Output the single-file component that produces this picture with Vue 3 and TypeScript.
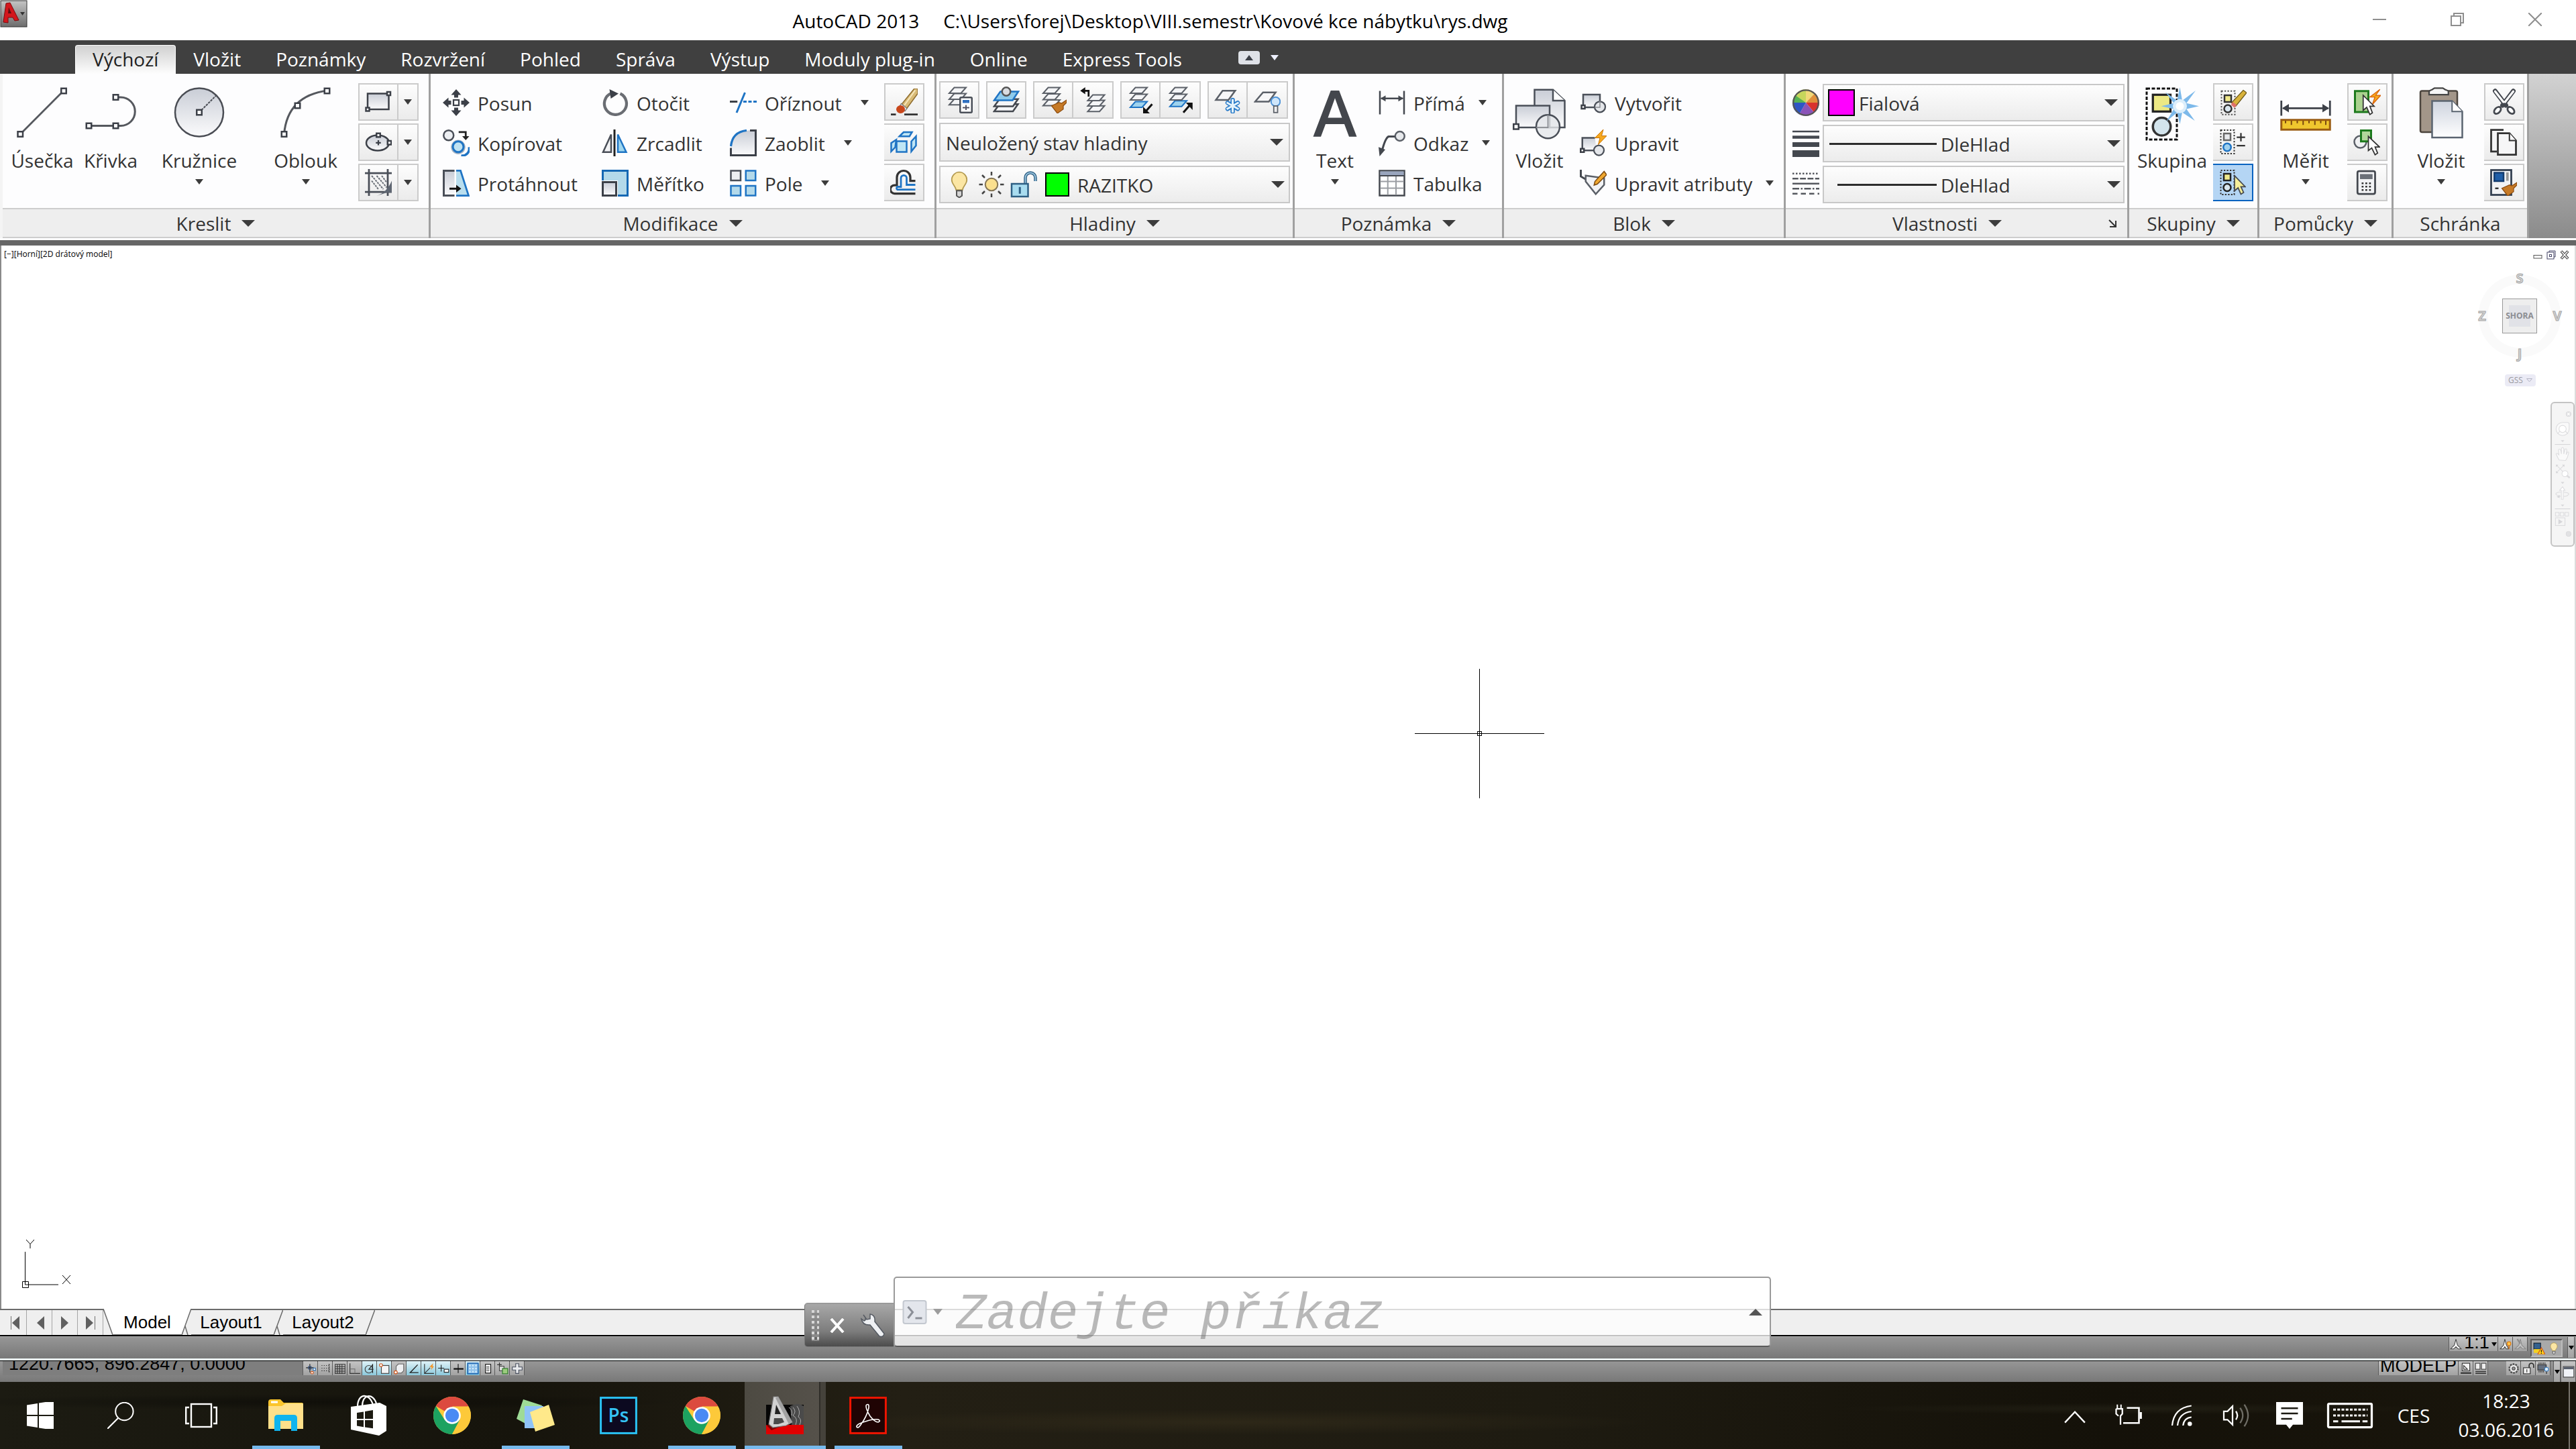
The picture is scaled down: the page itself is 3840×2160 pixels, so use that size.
<script setup lang="ts">
interface Tool {
  icon: string
  label: string
  caret?: boolean
}
interface Toggle {
  icon: string
  label: string
  on?: boolean
}
interface TaskItem {
  icon: string
  label: string
  running?: boolean
  active?: boolean
}

const sq = (x: number, y: number, s = 2.4): string =>
  `<rect x="${x - s / 2}" y="${y - s / 2}" width="${s}" height="${s}" fill="#fff" stroke="#3c4048" stroke-width="1"/>`

const sheet = (y: number, fill = '#f4f5f7', stroke = '#5b6068', x = 0): string =>
  `<path d="M${2 + x} ${y + 3.4}L${5 + x} ${y}H${12 + x}L${9 + x} ${y + 3.4}Z" fill="${fill}" stroke="${stroke}" stroke-width=".8"/>`

const chrome = `<circle cx="14" cy="14" r="14" fill="#fdc93a"/><path d="M14 14L1.9 7A14 14 0 0 1 26.1 7Z" fill="#dc4a3f"/><path d="M1.9 7A14 14 0 0 0 14 28L19.6 17.2L14 14L8.4 17.2Z" fill="#1ca261"/><path d="M14 28A14 14 0 0 0 26.2 7.3H14L20 17.2Z" fill="#fdc93a"/><circle cx="14" cy="14" r="6.4" fill="#fff"/><circle cx="14" cy="14" r="5.1" fill="#4a8af4"/>`

const icons: Record<string, string> = {
  line: `<path d="M2.9 28L28.8 2" stroke="#55585e" stroke-width="1.1"/>${sq(2.9, 28, 3)}${sq(28.8, 2.2, 3)}`,
  pline: `<path d="M19 6h3a8.5 8.5 0 0 1 0 17H3" fill="none" stroke="#55585e" stroke-width="1.2"/>${sq(19, 6, 3)}${sq(3, 23, 3)}${sq(19, 23, 3)}`,
  circle: `<circle cx="16" cy="15" r="14.4" fill="url(#gGrey)" stroke="#4a4d54" stroke-width="1"/><path d="M16 15L26 5" stroke="#4a4d54" stroke-width=".8" stroke-dasharray="1.4 .5"/>${sq(16, 15, 3)}`,
  arc: `<path d="M3 28Q5 5 29 2" fill="none" stroke="#55585e" stroke-width="1.2"/>${sq(3, 28, 3)}${sq(11, 11, 3)}${sq(28.6, 2.2, 3)}`,
  rect: `<rect x="1.6" y="3" width="12.6" height="9.4" fill="url(#gGrey)" stroke="#3c4048" stroke-width="1"/>${sq(14.2, 3, 2)}${sq(1.6, 12.4, 2)}`,
  ellipse: `<ellipse cx="7.6" cy="8.4" rx="6.8" ry="4.6" fill="url(#gGrey)" stroke="#3c4048"/><path d="M8 6.8v3M6.5 8.3h3" stroke="#3c4048" stroke-width=".9"/>${sq(8, 3.8, 2.2)}${sq(14.6, 8.3, 2.2)}`,
  hatch: `<path d="M0 2.4H16M0 13.6H16M2.4 0V16M13.6 0V16" stroke="#4a4f58" stroke-width="1.1"/><path d="M4 7l4 5M4 4l7 8M7 4l6 7M10 4l3 4" stroke="#6b7078" stroke-width=".8" stroke-dasharray="1.2 .5"/><path d="M7 16Q13 14 16 7V14L13 14Z" fill="#5f6672"/>`,
  move: `<path d="M8 0l3 3.4H9.200V5H6.800V3.400H5zM8 16l3-3.400H9.200V11H6.800v1.600H5zM0 8l3.400-3V6.800H5v2.400H3.400V11zM16 8l-3.400-3V6.800H11v2.400h1.600V11z" fill="#3c4048"/><rect x="6.400" y="6.400" width="3.200" height="3.200" fill="none" stroke="#3c4048" stroke-width=".9"/>`,
  copy: `<circle cx="3.500" cy="3.500" r="3" fill="#eceef1" stroke="#4a4f58"/><path d="M9.500 1.500h4.200v3.200" fill="none" stroke="#222" stroke-width="1.100"/><path d="M11.600 4h4.200l-2.100 2.400z" fill="#222"/><path d="M11 15.500a4 4 0 0 0 4.600-5" fill="none" stroke="#1f74c4" stroke-width="1.400"/><circle cx="9.200" cy="10.500" r="4.300" fill="#a9b6c4"/><circle cx="9.200" cy="10.300" r="3.200" fill="#bfe2f2" stroke="#1f74c4" stroke-width="1.200"/>`,
  stretch: `<path d="M7 .6H.6v14.8H7" fill="url(#gGrey)" stroke="#4a4f58" stroke-width="1.200"/><path d="M8 .5h2.600L15.400 15.400H8" fill="#b9deee" stroke="#1f74c4" stroke-width="1.100"/><path d="M4 11.300h5" stroke="#111" stroke-width="1.200"/><path d="M8 9l3 2.300L8 13.600z" fill="#111"/>`,
  rotate: `<path d="M11 2.600A6.600 6.600 0 1 1 5.800 2.400" fill="none" stroke="#6a6d73" stroke-width="1.700"/><path d="M4.600 0l5.400 2.600-4.600 3z" fill="#3c4048"/>`,
  mirror: `<path d="M5.600 3V13.500H.8z" fill="#f2f3f5" stroke="#4a4f58"/><path d="M9.600 3V13.500h5z" fill="#9fd6ee" stroke="#1f74c4"/><path d="M7.600 0V16" stroke="#222" stroke-width="1.200"/>`,
  scale: `<rect x=".6" y=".6" width="14.800" height="14.800" fill="#b3d9ea" stroke="#1568b4" stroke-width="1.200"/><rect x="0" y="6.400" width="9.600" height="9.600" fill="#fff"/><rect x=".6" y="7.400" width="8" height="8" fill="url(#gGrey)" stroke="#3c4048" stroke-width="1.200"/>`,
  trim: `<path d="M0 7.400H4.500" stroke="#3c4048" stroke-width="1.200"/><path d="M9 2L4 14" stroke="#1f74c4" stroke-width="1.200"/><path d="M8 7.400H16" stroke="#1f74c4" stroke-width="1.200" stroke-dasharray="2 1"/>`,
  fillet: `<path d="M.6 15.400V11Q1 1 11 .6H15.400V15.400Z" fill="url(#gGrey)"/><path d="M.6 11V15.400H15.400V.6H12" fill="none" stroke="#3c4048" stroke-width="1.200"/><path d="M.6 10Q1.500 1.500 10 .6" fill="none" stroke="#1f74c4" stroke-width="1.300"/>`,
  array: `<rect x=".6" y=".6" width="5.800" height="5.800" fill="#eceef1" stroke="#4a4f58"/><g fill="#b3d9ea" stroke="#1f74c4"><rect x="9.500" y=".6" width="5.800" height="5.800"/><rect x=".6" y="9.600" width="5.800" height="5.800"/><rect x="9.500" y="9.600" width="5.800" height="5.800"/></g>`,
  erase: `<path d="M14 0H16V3L9.400 12L6.200 9.600z" fill="#d9bb77" stroke="#8d6b2c" stroke-width=".6"/><path d="M14.500 1L8 10" stroke="#f6e7bd" stroke-width=".8"/><path d="M6.200 9l3.400 2.800-1.200 1.600-3.400-2.600z" fill="#e9ebee" stroke="#777" stroke-width=".5"/><ellipse cx="5.800" cy="12.400" rx="2.600" ry="2.400" fill="#c9461a"/><path d="M0 15.400H3M8 15.400H16" stroke="#333" stroke-width="1.100"/>`,
  explode: `<g fill="#bfe6f5" stroke="#1f74c4" stroke-width="1"><path d="M5.500 4.500L8 2h5L11.500 4.500z"/><path d="M3.600 6.500L.6 8.500v5L3 11z"/><path d="M12.600 7.500l2.800-3V10l-2.800 3.500z"/><rect x="3.800" y="7.400" width="6" height="6.400"/></g>`,
  offset: `<path d="M15 14.600H2.600a2.400 2.400 0 0 1 0-5H4V5a4 4 0 0 1 8 0V7H15" fill="none" stroke="#333" stroke-width="1.300"/><path d="M15 12.200H4.200a1 1 0 0 1 0-1.600H6.400V5.400a1.700 1.700 0 0 1 3.400 0V9.400H15" fill="none" stroke="#1f74c4" stroke-width="1.100"/>`,
  layerProps: `${sheet(7.500)}${sheet(4.200)}${sheet(.6)}<rect x="8.500" y="6.500" width="7" height="9" rx=".6" fill="#fff" stroke="#4a4f58"/><rect x="10" y="8" width="4" height="1.800" fill="#2f6fc0"/><path d="M10 12.600h4M12 11v3" stroke="#556" stroke-width=".8"/>`,
  layerCurrent: `<g stroke-width="1"><path d="M.8 14.800L4 10.500H15L12 14.800Z" fill="#f4f5f7" stroke="#44484f"/><path d="M.8 11.800L4 7.500H15L12 11.800Z" fill="#f4f5f7" stroke="#44484f"/><path d="M.8 8.200L4.500 3H15.200L11.800 8.200Z" fill="#8ecbec" stroke="#1f74c4"/></g><circle cx="8" cy="3" r="2.500" fill="#d9dce0" stroke="#555"/>`,
  layerMatch: `${sheet(8)}${sheet(4.400)}${sheet(.6)}<path d="M16 8l-3 2-1.500-.5-4.500 2 3.500 4.500 3.500-2.500V11.500L16 9.500z" fill="#c67a27" stroke="#8e4e10" stroke-width=".5"/>`,
  layerPrev: `${sheet(11.500, '#f4f5f7', '#5b6068', 3)}${sheet(8.200, '#f4f5f7', '#5b6068', 3)}${sheet(5, '#f4f5f7', '#5b6068', 3)}<path d="M2 2.500H5.500V6" fill="none" stroke="#111" stroke-width="1.100"/><path d="M.5 2.500L3.500 .4V4.600z" fill="#111"/>`,
  layerIso: `${sheet(9, '#9fd3ee', '#1f74c4')}${sheet(4.600)}${sheet(.6)}<path d="M15 10.500L11 15" stroke="#111" stroke-width="1.200"/><path d="M9.600 12v4h4z" fill="#111"/>`,
  layerUniso: `${sheet(8.500, '#9fd3ee', '#1f74c4')}${sheet(4.600)}${sheet(.6)}<path d="M10 15.500L13.500 11.500" stroke="#111" stroke-width="1.200"/><path d="M15.500 14V9.600h-4z" fill="#111"/>`,
  layerFreeze: `<path d="M1 8L5 2.500H12.500L8.500 8Z" fill="#f7f7f8" stroke="#5b6068"/><g stroke="#2b7cc9" stroke-width="2.600" stroke-linecap="round"><path d="M11 8v7M8 9.700l6 3.600M14 9.700l-6 3.600"/></g><g stroke="#e4f3fc" stroke-width="1.200"><path d="M11 7.500v8M7.400 9.500l7.200 4M14.600 9.500l-7.200 4"/></g>`,
  layerOff: `<path d="M.8 9L5.500 3.500H13L9 9Z" fill="#f7f7f8" stroke="#5b6068"/><circle cx="13" cy="9" r="2.700" fill="#cfe6fa" stroke="#4f94d8" stroke-width=".8"/><rect x="11.900" y="11.600" width="2.300" height="3.900" fill="#eee" stroke="#5b6068" stroke-width=".7"/>`,
  bulb: `<path d="M8 .6a4.600 4.600 0 0 1 4.500 4.700c0 2.600-2.300 3.500-2.600 6H6.100C5.800 8.800 3.500 7.900 3.500 5.300A4.600 4.600 0 0 1 8 .6z" fill="#fbe6a4" stroke="#b39a50" stroke-width=".7"/><path d="M6.400 11.700h3.200v3L8 15.800l-1.600-1.100z" fill="#d5d5d5" stroke="#555" stroke-width=".8"/>`,
  sun: `<circle cx="8" cy="8" r="3.700" fill="#fbe08e" stroke="#857554" stroke-width=".8"/><path d="M8 .4v2.200M8 13.400v2.200M.6 8h2.200M13.200 8h2.200M2.400 2.400L4 4M12 12l1.600 1.600M13.600 2.400L12 4M4 12l-1.600 1.600" stroke="#444" stroke-width="1"/>`,
  unlock: `<path d="M9 7.500V4a3 3 0 0 1 6 0v2" fill="none" stroke="#2e5f84" stroke-width="1.800"/><path d="M9 7.500V4a3 3 0 0 1 6 0v2" fill="none" stroke="#9cc6df" stroke-width=".7"/><rect x=".8" y="7.600" width="9.800" height="7.600" fill="#a8dcf0" stroke="#2e5f84"/><path d="M5.700 9.500v4" stroke="#2e5f84" stroke-width="1.200"/>`,
  text: `<path d="M3 29.500L13.500 2h5L29 29.500H24.400L21.600 22H10.400L7.600 29.500ZM11.800 18.200H20.200L16 6.500Z" fill="#43464c"/>`,
  dim: `<path d="M.8 1V15M15.200 1V15M1.500 5.500h13" stroke="#44484f" stroke-width="1"/><path d="M1.200 5.500l3-1.800v3.600zM14.800 5.500l-3-1.800v3.600z" fill="#44484f"/>`,
  leader: `<circle cx="12.700" cy="4" r="2.800" fill="#e7e9ec" stroke="#5b6068"/><path d="M9.800 4.200H6Q4 5 2 13" fill="none" stroke="#44484f" stroke-width="1.200"/><path d="M0 10.500l4 1.500-3.400 4z" fill="#44484f"/>`,
  table: `<rect x=".6" y=".6" width="14.800" height="14.800" fill="#fff" stroke="#44484f"/><rect x="1" y="1" width="14" height="2.400" fill="#9aa6be"/><path d="M1 7H15M1 11H15M5.500 4V15M10.400 4V15" stroke="#9b9ea3" stroke-width=".8"/><path d="M.6 3.600H15.400" stroke="#44484f" stroke-width=".8"/>`,
  insertBlock: `<path d="M13 12V1.500H24L31 8V24H20" fill="url(#gGrey)" stroke="#4a4f58" stroke-width="1"/><path d="M24 1.500V8H31" fill="#fff" stroke="#4a4f58"/><rect x="2" y="11" width="20" height="13" fill="url(#gGrey)" stroke="#4a4f58"/>${sq(2, 23.500, 3)}<circle cx="21" cy="23.500" r="7" fill="#e4e6ea" fill-opacity=".8" stroke="#4a4f58"/><path d="M21 16.500V24H14" fill="none" stroke="#8a8d93" stroke-width=".7"/>`,
  blockCreate: `<rect x="2" y="3.200" width="10" height="7.600" fill="url(#gGrey)" stroke="#4a4f58"/>${sq(2, 10.600, 2)}<circle cx="12" cy="10.500" r="3.200" fill="#e4e6ea" stroke="#4a4f58" stroke-width=".9"/><path d="M12 7v3.800H9" fill="none" stroke="#8a8d93" stroke-width=".6"/>`,
  blockEdit: `<path d="M9 5H1.500V12.500H10" fill="url(#gGrey)" stroke="#4a4f58"/>${sq(1.500, 12.500, 2)}<circle cx="11.400" cy="12.400" r="3" fill="#e4e6ea" stroke="#4a4f58" stroke-width=".9"/><path d="M14 0L9 5h3L11 9 16 3.800H13z" fill="#f7a81e" stroke="#c9760a" stroke-width=".4"/>`,
  attrEdit: `<path d="M.6 0V4L4 6" fill="none" stroke="#44484f" stroke-width="1.200"/><path d="M3.500 3.500L14.500 5V9L9.500 14.500 3.500 7z" fill="#f2f3f5" stroke="#5b6068"/><path d="M14.500 1L16 3 10.500 8.500 8.500 9.200 9 7z" fill="#f0a830" stroke="#7c4a10" stroke-width=".6"/>`,
  wheel: `<path d="M8 8L1 4.500A8 8 0 0 1 8 0z" fill="#c6d65c"/><path d="M8 8V0A8 8 0 0 1 13.500 2.500z" fill="#f0d878"/><path d="M8 8L13.500 2.300A8 8 0 0 1 16 8z" fill="#e0913a"/><path d="M8 8H16A8 8 0 0 1 13 14z" fill="#d9332e"/><path d="M8 8L13 14A8 8 0 0 1 4 15z" fill="#8a53b8"/><path d="M8 8L4 15A8 8 0 0 1 0 8z" fill="#2e55c4"/><path d="M8 8H0A8 8 0 0 1 1.500 3.500z" fill="#57b254"/><circle cx="8" cy="8" r="7.500" fill="none" stroke="#555" stroke-width=".9"/>`,
  weights: `<path d="M0 .8H16" stroke="#44484f" stroke-width="1"/><path d="M0 4.200H16" stroke="#44484f" stroke-width="1.800"/><path d="M0 8.600H16" stroke="#44484f" stroke-width="2.800"/><path d="M0 14H16" stroke="#44484f" stroke-width="4"/>`,
  linetypes: `<g stroke="#55585e" stroke-width="1"><path d="M0 1.500H16" stroke-dasharray="1 1"/><path d="M0 4.500H16" stroke-dasharray="3.500 1"/><path d="M0 7.500H16"/><path d="M0 10.500H16" stroke-dasharray="4 1 1 1"/><path d="M0 13.500H16" stroke-dasharray="3 2"/></g>`,
  group: `<rect x=".8" y=".8" width="18" height="30.400" fill="none" stroke="#111" stroke-width="1.200" stroke-dasharray="2 1"/><rect x="4.500" y="4.500" width="10.500" height="10" fill="#ece884" stroke="#222" stroke-width="1.300"/><circle cx="9.800" cy="23.500" r="5.300" fill="#d3e4ec" stroke="#333" stroke-width="1.400"/><path d="M20.600 0L22 8L30 2L24.500 9.500L32 11.300L24.500 13L29.500 20L22 15L20.600 22L19 15L12.500 20.500L17 13L9.500 11.300L17 9.500L12 3L19 8Z" fill="#7db9ea"/><circle cx="20.600" cy="11.300" r="4.200" fill="#dceefb"/><circle cx="20.600" cy="11.300" r="2.400" fill="#fff"/>`,
  ungroup: `<rect x="1" y="1.500" width="8" height="14" fill="none" stroke="#555" stroke-width=".8" stroke-dasharray=".9 .9"/><rect x="2.800" y="4" width="4" height="4" fill="#f0e98b" stroke="#333"/><circle cx="4.800" cy="12" r="2.200" fill="#d9e6ee" stroke="#333"/><path d="M14 1l2 1.500-6.500 8-2.500-2z" fill="#d8b23a" stroke="#6e5a1a" stroke-width=".5"/><path d="M7.800 8l2.300 1.800-1.400 1.700-2-1.800z" fill="#e0706a"/>`,
  groupEdit: `<rect x="1" y=".8" width="8" height="14" fill="none" stroke="#333" stroke-width=".8" stroke-dasharray=".9 .9"/><rect x="2.800" y="2.800" width="4" height="4" fill="#e7e9ec" stroke="#666"/><circle cx="4.800" cy="11" r="2.300" fill="#9fd0ee" stroke="#1f74c4"/><path d="M10.500 5h5M13 2.500v5M10.500 10h5" stroke="#333" stroke-width=".9"/>`,
  groupSelect: `<rect x="1" y=".8" width="8" height="14.400" fill="none" stroke="#333" stroke-width=".8" stroke-dasharray=".9 .9"/><rect x="2.800" y="2.800" width="4" height="4" fill="#f0e98b" stroke="#222"/><circle cx="4.800" cy="11" r="2.200" fill="#d9e6ee" stroke="#222"/><path d="M9.200 4V13L11.300 11.200 13 15 14.600 14 13 10.500H15.500z" fill="#f5ee9a" stroke="#44484f" stroke-width=".7"/>`,
  measure: `<path d="M1.500 8V17M30.500 8V17M2.500 12.500H29.500" stroke="#3c4048" stroke-width="1.100"/><path d="M2 12.500l4-2.500v5zM30 12.500l-4-2.500v5z" fill="#3c4048"/><rect x="1.500" y="19.500" width="29" height="5.800" fill="#f0c62e" stroke="#9a5c12" stroke-width="1.200"/><path d="M4 20v1.500M7.500 20v2.500M11 20v1.500M14.500 20v2.500M18 20v1.500M21.500 20v2.500M25 20v1.500M28 20v2.500" stroke="#7a4a10" stroke-width=".8"/>`,
  quickSelect: `<rect x=".6" y="1.500" width="8" height="12.500" fill="#a9d18e" stroke="#1d7a1d" stroke-width="1.200"/><path d="M15.500 .5L9.500 5h3L11 9.500 16 4H13z" fill="#f7a81e" stroke="#d8620a" stroke-width=".5"/><path d="M5.500 4V13L7.600 11.200 9.500 15.500 11 14.500 9.500 10.500H12z" fill="#fff" stroke="#333" stroke-width=".7"/>`,
  selectSimilar: `<circle cx="4.200" cy="7.800" r="3.600" fill="#f0f1f3" stroke="#5b6068"/><rect x="4.600" y="1" width="6" height="6.500" fill="#b2d79a" stroke="#1d7a1d" stroke-width="1.200"/><path d="M9 4.500V13L11 11.400 13 15.500 14.500 14.500 13 10.800H15.600z" fill="#fff" stroke="#333" stroke-width=".7"/>`,
  calc: `<rect x="2.500" y="1.200" width="10.500" height="13.600" rx="1" fill="#f2f3f5" stroke="#44484f" stroke-width="1.100"/><rect x="4" y="3" width="7.500" height="3" fill="#6b7078"/><path d="M5 8.500H11.500M5 10.500H11.500M5 12.500H11.500" stroke="#333" stroke-width="1" stroke-dasharray="1.100 1.100"/>`,
  paste: `<rect x="3.600" y="2.200" width="22" height="24.600" rx="1" fill="#a39689" stroke="#4c453e"/><path d="M8.800 4.400V2.600Q9 2 10.500 1.500L12 .5H17L18.500 1.500Q20.300 2 20.300 2.600V4.400z" fill="#f5f5f5" stroke="#444" stroke-width=".9"/><path d="M10.600 8.200H22.500L28.600 14.500V30H10.600Z" fill="url(#gSheet)" stroke="#5a6470" stroke-width="1"/><path d="M22.500 8.200V14.500H28.600" fill="#fff" stroke="#5a6470" stroke-width=".8"/>`,
  cut: `<path d="M2.600 1.500L9 10M13.400 1.500L7 10" stroke="#44484f" stroke-width="2.800" stroke-linecap="round"/><path d="M2.600 1.700L7.500 8M13.400 1.700L8.500 8" stroke="#fff" stroke-width="1.300" stroke-linecap="round"/><ellipse cx="4" cy="13" rx="2.400" ry="1.600" transform="rotate(-45 4 13)" fill="#fff" stroke="#44484f" stroke-width="1.100"/><ellipse cx="12" cy="13" rx="2.400" ry="1.600" transform="rotate(45 12 13)" fill="#fff" stroke="#44484f" stroke-width="1.100"/>`,
  copyClip: `<path d="M8 .6H.6V13.500H4" fill="#f4f4f5" stroke="#333" stroke-width="1.100"/><path d="M4.600 2.600H11.500L15.400 7V15.400H4.600Z" fill="#f6f6f7" stroke="#333" stroke-width="1.100"/><path d="M11.500 2.600V7H15.400" fill="#fff" stroke="#333" stroke-width=".8"/>`,
  matchProps: `<rect x=".6" y=".6" width="12" height="14.800" fill="#f2f3f5" stroke="#333f50" stroke-width="1.100"/><rect x="2.500" y="2.200" width="5.500" height="5" fill="#1f5ea8" stroke="#143d70"/><path d="M10.300 2v5" stroke="#999" stroke-width="1.500"/><path d="M5 11.500H3" stroke="#333"/><path d="M16 8l-3 2-1.500-.5-4.500 2 3.500 4.500 3.500-2.500V11.500L16 9.500z" fill="#c67a27" stroke="#8e4e10" stroke-width=".5"/>`,
  sInfer: `<path d="M7 2v11M2 7h10" stroke="#222"/><circle cx="7" cy="7" r="2" fill="none" stroke="#34507c"/><rect x="11.500" y="7.500" width="3" height="3" fill="#fff" stroke="#2b6cb0"/><circle cx="10" cy="13.500" r="1.600" fill="#fff" stroke="#d2561a"/>`,
  sSnap: `<path d="M3 4h11M3 7.500h11M3 11h11" stroke="#222" stroke-dasharray="1 2"/><path d="M13 2v12" stroke="#222" stroke-dasharray="2 1"/>`,
  sGrid: `<path d="M1 2.500h14M1 5.500h14M1 8.500h14M1 11.500h14M1 14.500h14M1.500 2v13M4.500 2v13M7.500 2v13M10.500 2v13M14.500 2v13" stroke="#333" stroke-width=".9"/>`,
  sOrtho: `<path d="M1.500 1V14.500H15" fill="none" stroke="#333"/><path d="M2 8.500h6v6" fill="none" stroke="#777"/>`,
  sPolar: `<circle cx="7" cy="9" r="5" fill="none" stroke="#444"/><path d="M12 3L7 9h6M12 2v12" fill="none" stroke="#222"/>`,
  sOsnap: `<rect x="4" y="4" width="10" height="10.500" fill="#f3f4f5" stroke="#444"/><circle cx="3.500" cy="3.500" r="2" fill="#fff" stroke="#d2561a"/>`,
  s3dOsnap: `<path d="M4 5l3-3h7v9l-3 3H4z" fill="#eff0f2" stroke="#666"/><circle cx="3.500" cy="13" r="2" fill="#fff" stroke="#d2561a"/>`,
  sOtrack: `<path d="M13 3L3 13.500h11" fill="none" stroke="#222" stroke-width="1.200"/>`,
  sDucs: `<path d="M2.500 2v12.500H15M2.500 14.500L10 7" fill="none" stroke="#333"/><path d="M14 1L9 6h3l-1 4 4-5h-2z" fill="#f7931e"/>`,
  sDyn: `<path d="M5 3v9M1 7.500h8" stroke="#222"/><rect x="9" y="9" width="6" height="4" fill="#fff" stroke="#222"/>`,
  sLwt: `<path d="M8 2v12" stroke="#111"/><path d="M2 8.500h13" stroke="#111" stroke-width="2"/>`,
  sTpy: `<rect x="1" y="1" width="14" height="14" fill="#8fc2ea" stroke="#1a62b0" stroke-width="1.400"/><path d="M3 4h10M3 8h10M3 12h10" stroke="#d6ebfa" stroke-width="2" stroke-dasharray="2 2"/>`,
  sQp: `<rect x="5" y="2.500" width="7" height="11.500" fill="#fff" stroke="#111"/><path d="M6.500 6h4M6.500 8.500h4M6.500 11h4" stroke="#111" stroke-width="1.200" stroke-dasharray="1.400 .7"/>`,
  sSc: `<path d="M4 0v6M1 3h6" stroke="#333"/><rect x="4" y="5" width="6" height="6" fill="#e4e4e4" stroke="#444"/><rect x="8" y="8" width="7" height="7" fill="#9bcb7e" stroke="#2c7a26"/>`,
  sAm: `<path d="M6 1.500h4V6h4.500v4H10v4.500H6V10H1.500V6H6z" fill="#e9ebee" stroke="#4a5160"/>`,
  annScale: `<path d="M8 1L6 9l-5 5h4l3-3 3 3h4l-5-5z" fill="#fff" stroke="#444" stroke-width=".9"/>`,
  annVis: `<path d="M7 1L5.500 9 1 14h4l2-3 2 3h3l-3-5z" fill="#fff" stroke="#444" stroke-width=".9"/><circle cx="12.500" cy="7" r="2.500" fill="#ffc64a" stroke="#e07b10"/><path d="M12.500 10v4" stroke="#c96a10" stroke-width="1.500"/>`,
  annAuto: `<path d="M8 1L6 9l-5 5h4l3-3 3 3h4l-5-5z" fill="#c4c4c4" stroke="#8c8c8c"/><path d="M4 1l4 6" stroke="#8c8c8c" stroke-width="2"/>`,
  warnFile: `<rect x="1" y="1" width="9" height="8" fill="#34618e" stroke="#123"/><rect x="1" y="9" width="10" height="5" fill="#f4d11f"/><path d="M11 7l5 9H6z" fill="#ffd21f" stroke="#d2561a"/><path d="M11 10v3M11 14v1" stroke="#111"/>`,
  quickLayout: `<rect x="3" y="1" width="10" height="10" fill="#f4f4f4" stroke="#333"/><path d="M5 4v5h5z" fill="none" stroke="#333"/><path d="M1 14h14" stroke="#333" stroke-width="2"/>`,
  quickDraw: `<rect x="1" y="1" width="6" height="8" fill="#eee" stroke="#444"/><rect x="9" y="1" width="6" height="8" fill="#eee" stroke="#444"/><path d="M1 12h14M1 14.500h14" stroke="#333" stroke-width="1.300"/>`,
  gear: `<circle cx="8" cy="8" r="5.600" fill="#eee" stroke="#444" stroke-width="2.400" stroke-dasharray="2.200 1.300"/><circle cx="8" cy="8" r="5" fill="#eee" stroke="#666" stroke-width=".6"/><circle cx="8" cy="8" r="2" fill="#999" stroke="#444"/>`,
  lockSmall: `<path d="M9 7V4a3 3 0 0 1 6 0v3" fill="none" stroke="#333" stroke-width="1.500"/><rect x="1.500" y="7" width="9" height="8" fill="#eee" stroke="#333"/><path d="M6 9v4" stroke="#333"/>`,
  chip: `<rect x="1" y="3" width="11" height="7" fill="#66707f" stroke="#333"/><path d="M2 1h10M2 12h8" stroke="#333" stroke-width="2" stroke-dasharray="1 1"/><circle cx="12.500" cy="9" r="2.600" fill="#dcefff" stroke="#3d7fc2"/><path d="M12.500 12v3" stroke="#555" stroke-width="1.600"/>`,
  cleanScreen: `<rect x="1" y="1" width="14" height="14" fill="#f1f3f7" stroke="#444"/><rect x="1.500" y="1.500" width="13" height="3" fill="#59616f"/>`,
  start: `<path d="M0 3.200L8 2v8.500H0zM9 1.800L20 0v10.500H9zM0 11.500h8V20l-8-1.200zM9 11.500h11V22L9 20.200z" fill="#fff" transform="translate(0 -1)"/>`,
  search: `<circle cx="12.700" cy="7" r="6.600" fill="none" stroke="#fff" stroke-width="1"/><path d="M8 12L0 20" stroke="#fff" stroke-width="1.100"/>`,
  taskview: `<rect x="4.500" y="1" width="15" height="17" fill="none" stroke="#fff" stroke-width="1.200"/><path d="M3 3.500H.6v12H3M21 3.500h2.400v12H21" fill="none" stroke="#fff" stroke-width="1.200"/>`,
  explorer: `<path d="M1 4Q1 2 3 2H10L12.500 4.500H26Q27 4.500 27 6V24H1Z" fill="#fbc52c"/><path d="M1 7H11L14 5H27V24H1Z" fill="#ffe08a"/><rect x="3" y="3.300" width="5" height="1.500" fill="#fff"/><path d="M5.500 25.500V16Q5.500 13.500 8 13.500H20Q22.500 13.500 22.500 16V25.500H18V18H10V25.500Z" fill="#10b4ee"/>`,
  store: `<path d="M5.500 7.500C5.500-2.500 14-3.500 17 6M9 7C9-2 17-3 19.500 5" fill="none" stroke="#fff" stroke-width="1.100"/><path d="M.5 7.500L22 4.500L27 7V25.500L21.500 29L.5 24.500Z" fill="#fff"/><path d="M5 12L10 11.200V16.500H5zM11 11L17 10V16.500H11zM5 17.500H10V22.600L5 21.700zM11 17.500H17V23.600L11 22.700z" fill="#1c1a12"/>`,
  chrome,
  sticky: `<path d="M5 2L19 6.500L13 23.500L0 16.500Z" fill="#9edb96"/><rect x="6" y="7" width="14" height="16.500" fill="#8fc3f7"/><path d="M10 11.500L24 6L28.500 21L14 26Z" fill="#ffe98a"/>`,
  photoshop: `<rect x=".8" y=".8" width="26.400" height="26.400" fill="#0c0920" stroke="#2ac2f4" stroke-width="1.500"/><text x="14" y="19" text-anchor="middle" font-size="14" fill="#35c3f5" font-family="Open Sans, sans-serif" font-weight="600">Ps</text>`,
  autocad: `<rect x="0" y="6" width="28" height="22" fill="#060606"/><path d="M18 7Q24 4 28 7V21H19z" fill="#4a4a4a"/><path d="M20 8q3 3 0 6q4 2 2 7M23 7q3 4 1 8q3 2 1 6M17 8q3 2 2 6" stroke="#aaa" stroke-width=".5" fill="none"/><rect x="0" y="21" width="28" height="7" fill="#e00000"/><path d="M0 21H14L4 25Z" fill="#7a0000"/><path d="M2 20.500L5.500 0H9L19.500 19L15 21.500L5 23Z" fill="#d2d2d2" stroke="#777" stroke-width=".6"/><path d="M7.500 6L11 13H6.500z" fill="#222"/><path d="M6 16H12L13.500 19L9 20.500L5.500 20.500z" fill="#4a4a4a"/><path d="M9 0L19.500 19L17 20.500L7 1z" fill="#a2a2a2"/>`,
  acrobat: `<rect x=".8" y=".8" width="26.400" height="26.400" fill="#200404" stroke="#f01400" stroke-width="1.500"/><path d="M13 6Q15 5 14.500 8.500Q13 15 8.500 21Q6.500 24 5.500 22.500Q5 20.500 12 18.500Q18 16.500 21.500 17Q24 18 21.500 19Q19 19 15.500 14.500Q12.500 9.500 12.500 7Q12.500 6 13 6Z" fill="none" stroke="#fff" stroke-width=".8"/>`,
  chevron: `<path d="M1 13L8 5.500L15 13" fill="none" stroke="#fff" stroke-width="1.100"/>`,
  battery: `<path d="M7 3.500H14.200V12.500H4.800" fill="none" stroke="#fff" stroke-width="1"/><path d="M15.300 6v4" stroke="#fff" stroke-width="1.300"/><path d="M1.300 1.500v2.500M3.500 1.500v2.500" stroke="#fff" stroke-width=".8"/><path d="M.6 4H4.300V7L3.200 8.300V13.500M.6 4V7L2 8.300" fill="none" stroke="#fff" stroke-width=".9"/>`,
  wifi: `<circle cx="12.500" cy="13" r="1.300" fill="#fff"/><path d="M8.500 14Q9 9.500 13.500 9M5.200 14Q6 6.500 13.500 5.600M2 14Q3 3.500 13.500 2.200" fill="none" stroke="#fff" stroke-width=".9"/>`,
  speaker: `<path d="M.8 5.500H3L6 2.500V13.500L3 10.500H.8Z" fill="none" stroke="#fff" stroke-width=".9"/><path d="M8 5.500q1.800 2.500 0 5" fill="none" stroke="#fff" stroke-width=".9"/><path d="M10.500 3.500q3.200 4.500 0 9M13 1.500q4.500 6.500 0 13" fill="none" stroke="#6f6d66" stroke-width=".9"/>`,
  note: `<path d="M0 0H16V13.500H10L8 16L6 13.500H0Z" fill="#fff"/><path d="M3 3.700H13M3 6.800H13M3 10H9.500" stroke="#1c1a12" stroke-width="1"/>`,
  keyboard: `<rect x="1" y="1" width="26" height="14" rx=".6" fill="none" stroke="#fff" stroke-width="1.300"/><path d="M4 4.500H24.500M4 8H24.500" stroke="#fff" stroke-width="1.200" stroke-dasharray="1.600 .9"/><path d="M4 11.500H7M9 11.500H20M21.500 11.500H24.500" stroke="#fff" stroke-width="1.200"/>`,
}

const tabs: string[] = ['Výchozí', 'Vložit', 'Poznámky', 'Rozvržení', 'Pohled', 'Správa', 'Výstup', 'Moduly plug-in', 'Online', 'Express Tools']

const drawBig: Tool[] = [
  { icon: 'line', label: 'Úsečka' },
  { icon: 'pline', label: 'Křivka' },
  { icon: 'circle', label: 'Kružnice', caret: true },
  { icon: 'arc', label: 'Oblouk', caret: true },
]
const drawSmall: string[] = ['rect', 'ellipse', 'hatch']

const modify: Tool[][] = [
  [
    { icon: 'move', label: 'Posun' },
    { icon: 'copy', label: 'Kopírovat' },
    { icon: 'stretch', label: 'Protáhnout' },
  ],
  [
    { icon: 'rotate', label: 'Otočit' },
    { icon: 'mirror', label: 'Zrcadlit' },
    { icon: 'scale', label: 'Měřítko' },
  ],
  [
    { icon: 'trim', label: 'Oříznout', caret: true },
    { icon: 'fillet', label: 'Zaoblit', caret: true },
    { icon: 'array', label: 'Pole', caret: true },
  ],
]
const modifySmall: string[] = ['erase', 'explode', 'offset']

const layerGroups: string[][] = [
  ['layerProps'],
  ['layerCurrent'],
  ['layerMatch', 'layerPrev'],
  ['layerIso', 'layerUniso'],
  ['layerFreeze', 'layerOff'],
]

const annotate: Tool[] = [
  { icon: 'dim', label: 'Přímá', caret: true },
  { icon: 'leader', label: 'Odkaz', caret: true },
  { icon: 'table', label: 'Tabulka' },
]
const block: Tool[] = [
  { icon: 'blockCreate', label: 'Vytvořit' },
  { icon: 'blockEdit', label: 'Upravit' },
  { icon: 'attrEdit', label: 'Upravit atributy', caret: true },
]

const toggles: Toggle[] = [
  { icon: 'sInfer', label: 'INFER' },
  { icon: 'sSnap', label: 'KROK' },
  { icon: 'sGrid', label: 'RASTR' },
  { icon: 'sOrtho', label: 'ORTO' },
  { icon: 'sPolar', label: 'POLAR', on: true },
  { icon: 'sOsnap', label: 'UCHOP', on: true },
  { icon: 's3dOsnap', label: '3DUCHOP' },
  { icon: 'sOtrack', label: 'OTRAS', on: true },
  { icon: 'sDucs', label: 'DUSS', on: true },
  { icon: 'sDyn', label: 'DYN', on: true },
  { icon: 'sLwt', label: 'TLČ' },
  { icon: 'sTpy', label: 'PRŮHL', on: true },
  { icon: 'sQp', label: 'RV' },
  { icon: 'sSc', label: 'CV' },
  { icon: 'sAm', label: 'AM' },
]

const taskItems: TaskItem[] = [
  { icon: 'explorer', label: 'Průzkumník souborů', running: true },
  { icon: 'store', label: 'Store' },
  { icon: 'chrome', label: 'Google Chrome' },
  { icon: 'sticky', label: 'Sticky Notes', running: true },
  { icon: 'photoshop', label: 'Photoshop' },
  { icon: 'chrome', label: 'Google Chrome', running: true },
  { icon: 'autocad', label: 'AutoCAD', running: true, active: true },
  { icon: 'acrobat', label: 'Acrobat', running: true },
]
const tray: string[] = ['chevron', 'battery', 'wifi', 'speaker', 'note']
</script>

<template>
  <div class="app">
    <svg class="defs" width="0" height="0" aria-hidden="true">
      <defs>
        <linearGradient id="gGrey" x1="0" y1="0" x2="0" y2="1">
          <stop offset="0" stop-color="#c9cdd6" />
          <stop offset="1" stop-color="#fbfbfc" />
        </linearGradient>
        <linearGradient id="gSheet" x1="0" y1="0" x2="0" y2="1">
          <stop offset="0" stop-color="#cdd3de" />
          <stop offset="1" stop-color="#ffffff" />
        </linearGradient>
        <linearGradient id="gApp" x1="0" y1="0" x2="0" y2="1">
          <stop offset="0" stop-color="#c4c4c4" />
          <stop offset="1" stop-color="#6d6d6d" />
        </linearGradient>
      </defs>
    </svg>

    <header class="titlebar">
      <button class="app-menu" aria-label="Nabídka aplikace">
        <svg viewBox="0 0 41 41">
          <rect x="1" y="1" width="39" height="39" fill="url(#gApp)" stroke="#333" stroke-width="1" />
          <path d="M5 33L9 5L15 4L28 30L22 31L19 26H12L12 34Z" fill="#d3171d" stroke="#7c0a0e" />
          <path d="M12 20L13 11L17 20Z" fill="#5c0d10" />
          <path d="M30 18h7l-3.500 5z" fill="#333" />
        </svg>
      </button>
      <h1 class="title"><span>AutoCAD 2013</span><span>C:\Users\forej\Desktop\VIII.semestr\Kovové kce nábytku\rys.dwg</span></h1>
      <div class="window-buttons">
        <button aria-label="Minimalizovat"><svg viewBox="0 0 20 20"><path d="M0 10H20" /></svg></button>
        <button aria-label="Obnovit"><svg viewBox="0 0 20 20"><path d="M1 5H15V19H1ZM5 5V1H19V15H15" /></svg></button>
        <button aria-label="Zavřít"><svg viewBox="0 0 20 20"><path d="M0 0L20 20M20 0L0 20" /></svg></button>
      </div>
    </header>

    <nav class="tabs">
      <button v-for="(t, i) in tabs" :key="t" class="tab" :class="{ current: i === 0 }">{{ t }}</button>
      <button class="collapse" aria-label="Sbalit pás karet">
        <svg class="collapse-box" viewBox="0 0 32 20"><rect width="32" height="20" rx="4" fill="#dfe2e8" /><path d="M10 14L16 6l6 8z" fill="#3c4048" /></svg>
        <svg class="caret light" viewBox="0 0 12 8"><path d="M0 0H12L6 8z" /></svg>
      </button>
    </nav>

    <section class="ribbon">
      <section class="panel first">
        <div class="body draw">
          <button v-for="b in drawBig" :key="b.label" class="big">
            <svg viewBox="0 0 32 32" v-html="icons[b.icon]"></svg>
            <span>{{ b.label }}</span>
            <svg v-if="b.caret" class="caret" viewBox="0 0 12 8"><path d="M0 0H12L6 8z" /></svg>
          </button>
          <div class="small-col">
            <div v-for="s in drawSmall" :key="s" class="split">
              <button class="small" :aria-label="s"><svg viewBox="0 0 16 16" v-html="icons[s]"></svg></button>
              <button class="drop" :aria-label="s + ' možnosti'"><svg class="caret" viewBox="0 0 12 8"><path d="M0 0H12L6 8z" /></svg></button>
            </div>
          </div>
        </div>
        <button class="panel-title">Kreslit<svg viewBox="0 0 20 10"><path d="M0 0H20L10 10z" /></svg></button>
      </section>

      <section class="panel">
        <div class="body modify">
          <div v-for="(col, i) in modify" :key="i" class="tool-col">
            <button v-for="t in col" :key="t.label" class="tool">
              <svg viewBox="0 0 16 16" v-html="icons[t.icon]"></svg>
              <span>{{ t.label }}</span>
              <svg v-if="t.caret" class="caret" viewBox="0 0 12 8"><path d="M0 0H12L6 8z" /></svg>
            </button>
          </div>
          <div class="small-col">
            <button v-for="s in modifySmall" :key="s" class="small" :aria-label="s"><svg viewBox="0 0 16 16" v-html="icons[s]"></svg></button>
          </div>
        </div>
        <button class="panel-title">Modifikace<svg viewBox="0 0 20 10"><path d="M0 0H20L10 10z" /></svg></button>
      </section>

      <section class="panel">
        <div class="body layers">
          <div class="layer-tools">
            <div v-for="(g, i) in layerGroups" :key="i" class="split">
              <button v-for="s in g" :key="s" class="small" :aria-label="s"><svg viewBox="0 0 16 16" v-html="icons[s]"></svg></button>
            </div>
          </div>
          <div class="combo">
            <select aria-label="Stav hladiny"><option>Neuložený stav hladiny</option></select>
            <svg class="arrow" viewBox="0 0 20 10"><path d="M0 0H20L10 10z" /></svg>
          </div>
          <div class="combo layer-combo">
            <svg class="ic" viewBox="0 0 16 16" v-html="icons.bulb"></svg>
            <svg class="ic" viewBox="0 0 16 16" v-html="icons.sun"></svg>
            <svg class="ic" viewBox="0 0 16 16" v-html="icons.unlock"></svg>
            <i class="swatch green"></i>
            <select aria-label="Hladina"><option>RAZITKO</option></select>
            <svg class="arrow" viewBox="0 0 20 10"><path d="M0 0H20L10 10z" /></svg>
          </div>
        </div>
        <button class="panel-title">Hladiny<svg viewBox="0 0 20 10"><path d="M0 0H20L10 10z" /></svg></button>
      </section>

      <section class="panel">
        <div class="body annotate">
          <button class="big">
            <svg viewBox="0 0 32 32" v-html="icons.text"></svg>
            <span>Text</span>
            <svg class="caret" viewBox="0 0 12 8"><path d="M0 0H12L6 8z" /></svg>
          </button>
          <div class="tool-col near">
            <button v-for="t in annotate" :key="t.label" class="tool">
              <svg viewBox="0 0 16 16" v-html="icons[t.icon]"></svg>
              <span>{{ t.label }}</span>
              <svg v-if="t.caret" class="caret" viewBox="0 0 12 8"><path d="M0 0H12L6 8z" /></svg>
            </button>
          </div>
        </div>
        <button class="panel-title">Poznámka<svg viewBox="0 0 20 10"><path d="M0 0H20L10 10z" /></svg></button>
      </section>

      <section class="panel">
        <div class="body block">
          <button class="big">
            <svg viewBox="0 0 32 32" v-html="icons.insertBlock"></svg>
            <span>Vložit</span>
          </button>
          <div class="tool-col near">
            <button v-for="t in block" :key="t.label" class="tool">
              <svg viewBox="0 0 16 16" v-html="icons[t.icon]"></svg>
              <span>{{ t.label }}</span>
              <svg v-if="t.caret" class="caret" viewBox="0 0 12 8"><path d="M0 0H12L6 8z" /></svg>
            </button>
          </div>
        </div>
        <button class="panel-title">Blok<svg viewBox="0 0 20 10"><path d="M0 0H20L10 10z" /></svg></button>
      </section>

      <section class="panel">
        <div class="body props">
          <div class="prop-row">
            <svg class="ic" viewBox="0 0 16 16" v-html="icons.wheel"></svg>
            <div class="combo">
              <i class="swatch magenta"></i>
              <select aria-label="Barva"><option>Fialová</option></select>
              <svg class="arrow" viewBox="0 0 20 10"><path d="M0 0H20L10 10z" /></svg>
            </div>
          </div>
          <div class="prop-row">
            <svg class="ic" viewBox="0 0 16 16" v-html="icons.weights"></svg>
            <div class="combo line-combo">
              <i class="sample"></i>
              <select aria-label="Tloušťka čáry"><option>DleHlad</option></select>
              <svg class="arrow" viewBox="0 0 20 10"><path d="M0 0H20L10 10z" /></svg>
            </div>
          </div>
          <div class="prop-row">
            <svg class="ic" viewBox="0 0 16 16" v-html="icons.linetypes"></svg>
            <div class="combo line-combo">
              <i class="sample short"></i>
              <select aria-label="Typ čáry"><option>DleHlad</option></select>
              <svg class="arrow" viewBox="0 0 20 10"><path d="M0 0H20L10 10z" /></svg>
            </div>
          </div>
        </div>
        <div class="title-row">
          <button class="panel-title">Vlastnosti<svg viewBox="0 0 20 10"><path d="M0 0H20L10 10z" /></svg></button>
          <button class="launcher" aria-label="Paleta vlastností"><svg viewBox="0 0 12 12"><path d="M1 1L10 10M11 2V11H2" /></svg></button>
        </div>
      </section>

      <section class="panel">
        <div class="body groups">
          <button class="big"><svg viewBox="0 0 32 32" v-html="icons.group"></svg><span>Skupina</span></button>
          <div class="small-col">
            <button class="small" aria-label="Rozdělit skupinu"><svg viewBox="0 0 16 16" v-html="icons.ungroup"></svg></button>
            <button class="small" aria-label="Upravit skupinu"><svg viewBox="0 0 16 16" v-html="icons.groupEdit"></svg></button>
            <button class="small pressed" aria-label="Výběr skupin"><svg viewBox="0 0 16 16" v-html="icons.groupSelect"></svg></button>
          </div>
        </div>
        <button class="panel-title">Skupiny<svg viewBox="0 0 20 10"><path d="M0 0H20L10 10z" /></svg></button>
      </section>

      <section class="panel">
        <div class="body utils">
          <button class="big">
            <svg viewBox="0 0 32 32" v-html="icons.measure"></svg><span>Měřit</span>
            <svg class="caret" viewBox="0 0 12 8"><path d="M0 0H12L6 8z" /></svg>
          </button>
          <div class="small-col">
            <button class="small" aria-label="Rychlý výběr"><svg viewBox="0 0 16 16" v-html="icons.quickSelect"></svg></button>
            <button class="small" aria-label="Vybrat podobné"><svg viewBox="0 0 16 16" v-html="icons.selectSimilar"></svg></button>
            <button class="small" aria-label="Kalkulačka"><svg viewBox="0 0 16 16" v-html="icons.calc"></svg></button>
          </div>
        </div>
        <button class="panel-title">Pomůcky<svg viewBox="0 0 20 10"><path d="M0 0H20L10 10z" /></svg></button>
      </section>

      <section class="panel">
        <div class="body clip">
          <button class="big">
            <svg viewBox="0 0 32 32" v-html="icons.paste"></svg><span>Vložit</span>
            <svg class="caret" viewBox="0 0 12 8"><path d="M0 0H12L6 8z" /></svg>
          </button>
          <div class="small-col">
            <button class="small" aria-label="Vyjmout"><svg viewBox="0 0 16 16" v-html="icons.cut"></svg></button>
            <button class="small" aria-label="Kopírovat"><svg viewBox="0 0 16 16" v-html="icons.copyClip"></svg></button>
            <button class="small" aria-label="Kopírovat vlastnosti"><svg viewBox="0 0 16 16" v-html="icons.matchProps"></svg></button>
          </div>
        </div>
        <div class="panel-title">Schránka</div>
      </section>
      <div class="ribbon-rest"></div>
    </section>

    <main class="canvas">
      <p class="viewport-label">[−][Horní][2D drátový model]</p>

      <div class="doc-buttons">
        <button aria-label="Minimalizovat výkres"><svg viewBox="0 0 14 14"><rect x="1" y="7.500" width="12" height="4.500" fill="#fff" stroke="#555" /></svg></button>
        <button aria-label="Obnovit výkres"><svg viewBox="0 0 14 14"><path d="M4 3V1H13V10H11" fill="none" stroke="#446" /><rect x="1" y="3" width="10" height="10" fill="#fff" stroke="#446" /><rect x="4.500" y="6.500" width="3" height="3" fill="#fff" stroke="#446" /></svg></button>
        <button aria-label="Zavřít výkres"><svg viewBox="0 0 14 14"><path d="M2 1.500L12 12.500M12 1.500L2 12.500" stroke="#444" stroke-width="4" /><path d="M2.500 2L11.500 12M11.500 2L2.500 12" stroke="#fff" stroke-width="1.600" /></svg></button>
      </div>

      <div class="viewcube">
        <span class="n">S</span>
        <span class="w">Z</span>
        <button class="face">SHORA</button>
        <span class="e">V</span>
        <span class="s">J</span>
      </div>
      <button class="ucs-menu">GSS<svg viewBox="0 0 9 6"><path d="M.5 .5H8.500L4.500 5z" /></svg></button>

      <div class="navbar">
        <svg viewBox="0 0 36 216">
          <g fill="none" stroke="#dcdcde" stroke-width="1.200">
            <circle cx="28" cy="7" r="4" fill="#e2e2e4" />
            <path d="M26 5l4 4M30 5l-4 4" stroke="#fff" />
            <path d="M18 21H26Q29 21 29 24V32A11 11 0 1 1 18 21Z" fill="#fafafa" />
            <circle cx="18" cy="32" r="6" fill="#fff" />
            <path d="M13 36L10 40M23 36L27 40" />
            <path d="M12 84L7 74Q9 71 12 76L11 67Q13 64 15 68L16 74L16 65Q18 61 20 65L20 74L22 66Q25 64 25 68L24 75L26 71Q29 70 28 73L26 80L23 85Z" fill="#fafafa" />
            <path d="M7 92L21 106M21 92L7 106" />
            <circle cx="22" cy="107" r="5" fill="#fff" />
            <path d="M25 110L30 114" stroke-width="3" />
            <path d="M16 150V135H13L18 129L22 135H19V150Z" fill="#fff" />
            <path d="M15 145Q5 143 7 140Q11 137 15 138M20 138Q30 139 28 142Q26 145 20 145" />
            <rect x="6" y="172" width="6" height="6" /><rect x="14" y="172" width="6" height="6" /><rect x="22" y="172" width="6" height="6" />
            <rect x="6" y="181" width="16" height="13" />
            <circle cx="28" cy="208" r="4" fill="#e2e2e4" />
          </g>
          <path d="M11 183L18 187.500L11 192ZM15 51H21L18 54ZM15 121H21L18 124ZM15 159H21L18 162ZM7 92h4l-4 4zM21 92h-4l4 4zM7 106h4l-4-4zM8 146l5-3v5z" fill="#d6d6d9" />
          <path d="M5 58H31M5 166H31" stroke="#d0d0d2" />
        </svg>
      </div>

      <svg class="crosshair" viewBox="0 0 193 193">
        <path d="M0 96.500H193M96.500 0V193" />
        <rect x="93.500" y="93.500" width="6" height="6" />
      </svg>

      <svg class="ucs" viewBox="0 0 76 76">
        <path d="M6.500 20V69H56M2.500 64.500H11.500V73.500H2.500ZM8 2L14 8.500L20 2M14 8.500V15M62 55L74 68M74 55L62 68" />
      </svg>

      <div class="command">
        <div class="command-handle">
          <span class="grip"></span>
          <button aria-label="Zavřít příkazový řádek"><svg viewBox="0 0 26 22"><path d="M4 1L22 21M22 1L4 21" stroke="#fff" stroke-width="4" /></svg></button>
          <button aria-label="Přizpůsobit"><svg class="wrench" viewBox="0 0 36 36"><path d="M4 2L9 9L14 8L14 1Q22 2 21 12L35 30Q34 36 28 34L14 17Q3 18 1 8L5 11Q8 10 7 6Z" fill="#eef0f3" stroke="#555a62" stroke-width="1.500" /></svg></button>
        </div>
        <div class="command-box">
          <button class="prompt" aria-label="Poslední příkazy">
            <svg class="prompt-icon" viewBox="0 0 36 36"><rect x="1" y="1" width="34" height="34" rx="3" fill="#e3e6ec" stroke="#c3c8d0" stroke-width="2" /><path d="M8 10L15 18L8 27" fill="none" stroke="#8b8f97" stroke-width="3" /><path d="M19 27H29" stroke="#8b8f97" stroke-width="3" /></svg>
            <svg class="prompt-caret" viewBox="0 0 14 9"><path d="M0 0H14L7 9z" /></svg>
          </button>
          <input type="text" aria-label="Příkaz" placeholder="Zadejte příkaz" />
          <button class="history" aria-label="Historie příkazů"><svg viewBox="0 0 20 10"><path d="M0 10H20L10 0z" /></svg></button>
        </div>
      </div>
    </main>

    <nav class="layouts">
      <button class="step" aria-label="První"><svg viewBox="0 0 38 36"><path d="M14.500 8V28" /><path class="f" d="M27 8V28L16 18z" /></svg></button>
      <button class="step" aria-label="Předchozí"><svg viewBox="0 0 38 36"><path class="f" d="M26 8V28L15 18z" /></svg></button>
      <button class="step" aria-label="Další"><svg viewBox="0 0 38 36"><path class="f" d="M13 8V28L24 18z" /></svg></button>
      <button class="step" aria-label="Poslední"><svg viewBox="0 0 38 36"><path class="f" d="M12 8V28L23 18z" /><path d="M25.500 8V28" /></svg></button>
      <svg class="edge" viewBox="0 0 14 39"><path class="paper" d="M0 0H14V39Z" /><path d="M0 0L14 39" /></svg>
      <button class="sheet-tab current">Model</button>
      <svg class="edge" viewBox="0 0 14 39"><path class="paper" d="M0 0H14L0 39Z" /><path d="M14 0L0 39M5 26L9 39" /></svg>
      <button class="sheet-tab">Layout1</button>
      <svg class="edge" viewBox="0 0 14 39"><path d="M14 1L0 39M5 26L9 39M0 1H14" /></svg>
      <button class="sheet-tab">Layout2</button>
      <svg class="edge" viewBox="0 0 14 39"><path d="M14 1L0 39M0 1H14" /></svg>
    </nav>

    <div class="status upper">
      <div class="cells">
        <button class="cell wide"><svg viewBox="0 0 16 16" v-html="icons.annScale"></svg><span>1:1</span><svg class="tiny" viewBox="0 0 8 6"><path d="M0 0H8L4 6z" /></svg></button>
        <button class="cell" aria-label="Viditelnost poznámek"><svg viewBox="0 0 16 16" v-html="icons.annVis"></svg></button>
        <button class="cell" aria-label="Automatické měřítko"><svg viewBox="0 0 16 16" v-html="icons.annAuto"></svg></button>
      </div>
      <div class="notices">
        <button aria-label="Upozornění"><svg viewBox="0 0 16 16" v-html="icons.warnFile"></svg></button>
        <button aria-label="Izolovat objekty"><svg viewBox="0 0 16 16" v-html="icons.bulb"></svg></button>
      </div>
      <button class="cell tall" aria-label="Nabídka stavového řádku výkresu"><svg class="tiny" viewBox="0 0 8 6"><path d="M0 0H8L4 6z" /></svg></button>
    </div>

    <div class="status lower">
      <output class="coords">1220.7665, 896.2847, 0.0000</output>
      <div class="cells toggles">
        <button v-for="t in toggles" :key="t.label" class="cell" :class="{ on: t.on }" :aria-label="t.label"><svg viewBox="0 0 16 16" v-html="icons[t.icon]"></svg></button>
      </div>
      <div class="cells right">
        <button class="cell model">MODELP</button>
        <button class="cell" aria-label="Rychlé zobrazení rozvržení"><svg viewBox="0 0 16 16" v-html="icons.quickLayout"></svg></button>
        <button class="cell" aria-label="Rychlé zobrazení výkresů"><svg viewBox="0 0 16 16" v-html="icons.quickDraw"></svg></button>
      </div>
      <div class="cells spaced">
        <button class="cell" aria-label="Pracovní prostor"><svg viewBox="0 0 16 16" v-html="icons.gear"></svg></button>
        <button class="cell" aria-label="Zamknout panely"><svg viewBox="0 0 16 16" v-html="icons.lockSmall"></svg></button>
        <button class="cell" aria-label="Hardwarová akcelerace"><svg viewBox="0 0 16 16" v-html="icons.chip"></svg></button>
      </div>
      <button class="cell tall" aria-label="Nabídka stavového řádku"><svg class="tiny" viewBox="0 0 8 6"><path d="M0 0H8L4 6z" /></svg></button>
      <button class="cell tall last" aria-label="Čistá obrazovka"><svg viewBox="0 0 16 16" v-html="icons.cleanScreen"></svg></button>
    </div>

    <footer class="taskbar">
      <button class="sys" aria-label="Start"><svg class="i40" viewBox="0 0 20 20" v-html="icons.start"></svg></button>
      <button class="sys" aria-label="Hledat"><svg class="i40" viewBox="0 0 20 20" v-html="icons.search"></svg></button>
      <button class="sys" aria-label="Zobrazení úkolů"><svg class="i48" viewBox="0 0 24 19" v-html="icons.taskview"></svg></button>
      <div class="apps">
        <button v-for="(a, i) in taskItems" :key="i" class="task" :class="{ running: a.running, active: a.active }" :aria-label="a.label">
          <svg viewBox="0 0 28 28" v-html="icons[a.icon]"></svg>
        </button>
      </div>
      <div class="tray">
        <button v-for="t in tray" :key="t" :class="t" :aria-label="t"><svg viewBox="0 0 16 16" v-html="icons[t]"></svg></button>
        <button class="keyboard" aria-label="Dotyková klávesnice"><svg viewBox="0 0 28 16" v-html="icons.keyboard"></svg></button>
        <button class="lang">CES</button>
        <button class="clock"><time>18:23</time><time>03.06.2016</time></button>
        <button class="desktop" aria-label="Zobrazit plochu"></button>
      </div>
    </footer>
  </div>
</template>

<style>
body {
  background: #fff;
}
</style>

<style scoped>
* {
  box-sizing: border-box;
}
.app {
  display: flex;
  flex-direction: column;
  min-height: 100vh;
  font-family: "Open Sans", "Noto Sans", sans-serif;
  font-size: 28px;
  line-height: 40px;
  color: #333;
  overflow: hidden;
}
.defs {
  position: absolute;
}
svg {
  display: block;
  flex: none;
}
button {
  margin: 0;
  padding: 0;
  border: 0;
  background: none;
  color: inherit;
  font: inherit;
}
.caret {
  width: 12px;
  height: 8px;
  fill: #3c3c3c;
}
.caret.light {
  fill: #eef0ff;
}

.titlebar {
  display: flex;
  height: 60px;
  color: #000;
}
.app-menu {
  width: 41px;
  height: 41px;
}
.title {
  flex: 1;
  display: flex;
  justify-content: center;
  gap: 36px;
  margin: 0;
  padding-top: 11px;
  font-size: 28px;
  font-weight: 400;
  white-space: nowrap;
}
.window-buttons {
  display: flex;
  align-items: center;
  justify-content: flex-end;
  gap: 96px;
  width: 452px;
  padding: 0 51px 2px 0;
}
.window-buttons svg {
  width: 20px;
  height: 20px;
  fill: none;
  stroke: #8e8e8e;
  stroke-width: 2;
}

.tabs {
  display: flex;
  align-items: flex-end;
  height: 50px;
  padding-left: 112px;
  background: #404040;
  color: #fff;
}
.tab {
  height: 43px;
  padding: 0 25px 2px;
  border: 1px solid transparent;
  border-bottom: 0;
  white-space: nowrap;
}
.tab.current {
  border-color: #fff;
  border-radius: 4px 4px 0 0;
  background: linear-gradient(#d0d0d0, #fdfdfd);
  color: #222;
}
.collapse {
  display: flex;
  align-items: center;
  gap: 16px;
  height: 48px;
  margin-left: 58px;
}
.collapse-box {
  width: 32px;
  height: 20px;
}

.ribbon {
  display: grid;
  grid-template-columns: 642fr 754fr 534fr 312fr 420fr 512fr 194fr 200fr 202fr 70fr;
  height: 256px;
  padding-bottom: 3px;
  border-bottom: 8px solid #666;
  background: #fdfdfe;
}
.panel {
  display: flex;
  flex-direction: column;
  min-width: 0;
  border-right: 3px solid #a0a0a0;
  background: #fdfdfe;
}
.panel.first {
  border-left: 4px solid #f4f4f4;
}
.body {
  display: grid;
  height: 200px;
}
.draw {
  grid-template-columns: 100px 104px 160px 157px 90px;
  padding-left: 9px;
}
.modify {
  grid-template-columns: 237px 191px 230px 60px;
  padding-left: 18px;
}
.annotate {
  grid-template-columns: 120px 1fr;
  column-gap: 5px;
}
.block {
  grid-template-columns: 106px 1fr;
  column-gap: 7px;
}
.groups {
  grid-template-columns: 122px 60px;
  padding-left: 3px;
}
.utils {
  grid-template-columns: 124px 60px;
  padding-left: 7px;
}
.clip {
  grid-template-columns: 128px 60px;
  padding-left: 7px;
}
.big {
  display: flex;
  flex-direction: column;
  align-items: center;
  gap: 8px;
  padding-top: 20px;
  white-space: nowrap;
}
.big span {
  padding-top: 1px;
}
.big > svg:first-child {
  width: 80px;
  height: 80px;
}
.small-col {
  display: flex;
  flex-direction: column;
  gap: 4px;
  padding-top: 14px;
}
.split {
  display: flex;
}
.small,
.drop {
  display: flex;
  align-items: center;
  justify-content: center;
  width: 60px;
  height: 56px;
  border: 2px solid #cbcbcb;
  background: linear-gradient(#fdfdfd, #ebebeb);
}
.small + .small,
.drop {
  border-left-width: 0;
}
.drop {
  width: 30px;
}
.small svg {
  width: 40px;
  height: 40px;
}
.small.pressed {
  border-color: #0a63c0;
  background: #b4d5f4;
}
.tool-col {
  display: flex;
  flex-direction: column;
  gap: 20px;
  padding-top: 23px;
}
.tool {
  display: flex;
  align-items: center;
  gap: 12px;
  height: 40px;
  white-space: nowrap;
}
.tool span {
  padding-top: 2px;
}
.tool > svg:first-child,
.ic {
  width: 40px;
  height: 40px;
}
.tool .caret {
  margin-left: 16px;
}
.near .tool .caret {
  margin-left: 8px;
}
.layers {
  grid-template-rows: 56px 58px 56px;
  row-gap: 6px;
  padding: 11px 4px 7px 4px;
}
.layer-tools {
  display: flex;
  gap: 10px;
}
.combo {
  display: flex;
  align-items: center;
  flex: 1;
  min-width: 0;
  padding: 0 8px;
  border: 2px solid #c8c8c8;
  background: linear-gradient(#fdfdfd, #ececec);
}
.combo select {
  flex: 1;
  min-width: 0;
  height: 42px;
  padding: 2px 0 0;
  border: 0;
  background: none;
  appearance: none;
  color: #333;
  font: inherit;
}
.arrow {
  width: 20px;
  height: 10px;
  fill: #3c3c3c;
}
.layer-combo {
  padding: 0 6px 0 8px;
}
.layer-combo .ic + .ic {
  margin-left: 8px;
}
.swatch {
  flex: none;
  width: 36px;
  height: 36px;
  margin: 0 12px;
  border: 2px solid #000;
}
.green {
  background: #0f0;
}
.magenta {
  width: 40px;
  height: 40px;
  margin: 0 6px 0 -2px;
  background: #f0f;
}
.props {
  grid-template-rows: 56px 56px 56px;
  row-gap: 5px;
  padding: 15px 4px 7px 10px;
}
.prop-row {
  display: flex;
  align-items: center;
  gap: 5px;
}
.prop-row .combo {
  height: 56px;
}
.combo.line-combo {
  padding-right: 4px;
}
.sample {
  flex: none;
  width: 160px;
  height: 3px;
  margin-right: 6px;
  background: #2c2c2c;
}
.sample.short {
  width: 148px;
  margin-left: 12px;
}
.panel-title {
  display: flex;
  flex: 1;
  align-items: center;
  justify-content: center;
  gap: 16px;
  border-top: 2px solid #cdcdcd;
  border-bottom: 2px solid #cdcdcd;
  background: #eee;
  white-space: nowrap;
}
.panel-title svg {
  width: 20px;
  height: 10px;
  fill: #3c3c3c;
}
.title-row {
  display: flex;
  flex: 1;
}
.launcher {
  display: flex;
  align-items: center;
  width: 28px;
  border-top: 2px solid #cdcdcd;
  border-bottom: 2px solid #cdcdcd;
  background: #eee;
}
.launcher svg {
  width: 12px;
  height: 12px;
  fill: none;
  stroke: #333;
  stroke-width: 2;
}
.ribbon-rest {
  background: linear-gradient(#d2d2d2, #8b8b8b);
}

.canvas {
  position: relative;
  flex: 1;
  border-left: 2px solid #8a8a8a;
  border-right: 2px solid #dcdcdc;
  background: #fff;
}
.viewport-label {
  margin: 0;
  padding: 5px 4px;
  color: #000;
  font-size: 12px;
  line-height: 16px;
}
.doc-buttons {
  position: absolute;
  top: 7px;
  right: 8px;
  display: flex;
  gap: 6px;
}
.doc-buttons svg {
  width: 14px;
  height: 14px;
}
.viewcube {
  position: absolute;
  top: 38px;
  right: 18px;
  display: grid;
  grid-template-columns: 16px 96px 16px;
  grid-template-rows: 22px 90px 22px;
  width: 128px;
  height: 134px;
  place-items: center;
  background: radial-gradient(circle, #fff 47px, #fafafa 48px, #fafafa 61px, transparent 62px);
  color: #d2d2d2;
  font-size: 20px;
  font-weight: 700;
  line-height: 22px;
}
.viewcube span {
  -webkit-text-stroke: 1px #a8a8a8;
}
.n,
.s {
  grid-column: 2;
}
.n {
  grid-row: 1;
}
.s {
  grid-row: 3;
}
.w,
.face,
.e {
  grid-row: 2;
}
.face {
  width: 52px;
  height: 52px;
  border: 1px solid #999;
  background: linear-gradient(#e1e2e7, #e1e2e7) center / 32px 32px no-repeat #eee;
  color: #8c8d92;
  font-size: 12px;
  font-weight: 700;
}
.ucs-menu {
  position: absolute;
  top: 192px;
  right: 58px;
  display: flex;
  align-items: center;
  justify-content: space-between;
  width: 46px;
  height: 18px;
  padding: 0 5px;
  border-radius: 4px;
  background: #ebebf5;
  color: #9a9a9f;
  font-size: 12px;
  line-height: 16px;
}
.ucs-menu svg {
  width: 9px;
  height: 6px;
  fill: none;
  stroke: #b4b4c4;
}
.navbar {
  position: absolute;
  top: 233px;
  right: 0;
  width: 36px;
  height: 216px;
  border: 2px solid #c4c4c4;
  border-radius: 6px;
  background: #f5f5f5;
}
.navbar svg {
  width: 32px;
  height: 212px;
}
.crosshair {
  position: absolute;
  top: 631px;
  left: 2107px;
  width: 193px;
  height: 193px;
  fill: none;
  stroke: #000;
  shape-rendering: crispEdges;
}
.ucs {
  position: absolute;
  left: 29px;
  bottom: 29px;
  width: 76px;
  height: 76px;
  fill: none;
  stroke: #000;
}
.command {
  position: absolute;
  z-index: 2;
  bottom: -57px;
  left: 1197px;
  display: flex;
  align-items: flex-end;
  width: 1441px;
}
.command-handle {
  display: flex;
  align-items: center;
  gap: 14px;
  width: 133px;
  height: 66px;
  padding-left: 10px;
  border: 1px solid #777;
  border-top: 2px solid #9a9a9a;
  border-right: 0;
  border-radius: 5px 0 0 5px;
  background: linear-gradient(#a8a8a8, #7c7c7c 65%, #4c4c4c);
}
.grip {
  width: 11px;
  height: 46px;
  background: repeating-linear-gradient(transparent 0 4px, #8a8a8a 4px 8px), repeating-linear-gradient(90deg, #d8d8d8 0 4px, transparent 4px 8px);
}
.command-handle svg {
  width: 26px;
  height: 22px;
}
.command-handle .wrench {
  width: 36px;
  height: 36px;
  margin-left: 8px;
}
.command-box {
  display: flex;
  align-items: center;
  flex: 1;
  height: 105px;
  padding: 0 11px;
  border: 2px solid #9a9a9a;
  border-bottom-color: #5a5a5a;
  border-radius: 5px;
  background: rgba(255, 255, 255, 0.76);
}
.prompt {
  display: flex;
  align-items: center;
  gap: 9px;
}
.prompt-icon {
  width: 37px;
  height: 36px;
}
.prompt-caret {
  width: 14px;
  height: 9px;
  fill: #9c9c9c;
}
.command-box input {
  flex: 1;
  min-width: 0;
  height: 101px;
  margin-left: 20px;
  padding: 8px 0 0;
  border: 0;
  outline: 0;
  background: none;
  color: #444;
  font: italic 76px/92px "Liberation Mono", monospace;
}
.command-box input::placeholder {
  color: rgba(90, 90, 90, 0.42);
  opacity: 1;
}
.history svg {
  width: 20px;
  height: 10px;
  fill: #555;
}

.layouts {
  display: flex;
  height: 41px;
  padding-left: 2px;
  border-top: 2px solid #6b6b6b;
  border-bottom: 2px solid #000;
  background: #efefef;
  color: #000;
  font: 26px/34px "Liberation Sans", Arial, sans-serif;
}
.step {
  width: 38px;
  border-right: 1px solid #a5a5a5;
}
.step svg {
  width: 38px;
  height: 36px;
  fill: none;
  stroke: #707070;
}
.step .f {
  fill: #606060;
  stroke: none;
}
.edge {
  width: 14px;
  height: 39px;
  margin-top: -2px;
  fill: none;
  stroke: #6b6b6b;
  stroke-width: 1.5;
}
.edge .paper {
  fill: #fff;
  stroke: none;
}
.sheet-tab {
  width: 123px;
  padding-right: 4px;
  border-bottom: 1px solid #6b6b6b;
}
.sheet-tab.current {
  width: 103px;
  margin-top: -2px;
  padding: 2px 0 0;
  background: #fff;
}

.status {
  display: flex;
  background: linear-gradient(#969696, #787878);
  color: #000;
  font: 27px/32px "Liberation Sans", Arial, sans-serif;
}
.upper {
  height: 36px;
  justify-content: flex-end;
  border-top: 1px solid #b4b4b4;
  border-bottom: 3px solid #e8f0f0;
  padding-right: 2px;
}
.lower {
  height: 32px;
  border-top: 1px solid #000;
}
.cells {
  display: flex;
  height: 21px;
}
.cell {
  display: flex;
  align-items: center;
  justify-content: center;
  width: 22px;
  height: 21px;
  border-right: 1px solid #5c5c5c;
  background: linear-gradient(#c4c4c4, #a2a2a2);
  overflow: hidden;
}
.cell svg,
.notices svg {
  width: 18px;
  height: 18px;
}
.cell .tiny {
  width: 8px;
  height: 6px;
  fill: #000;
}
.cell.wide {
  width: 74px;
  gap: 3px;
  border-left: 1px solid #5c5c5c;
}
.cell.wide span {
  padding-bottom: 6px;
}
.notices {
  display: flex;
  align-items: center;
  gap: 4px;
  height: 27px;
  margin: 3px 7px 0 4px;
  padding: 0 2px;
  border: 2px solid #5a5a5a;
  border-right-color: #bbb;
  border-bottom-color: #bbb;
  background: #a9a9a9;
}
.cell.tall {
  width: 11px;
  height: 31px;
  border-left: 1px solid #5c5c5c;
}
.cell.tall.last {
  width: 23px;
}
.cell.on {
  background: linear-gradient(#e0f3f8, #8cc9dc);
}
.coords {
  width: 447px;
  height: 21px;
  margin-left: 4px;
  padding-left: 9px;
  background: #7e7e7e;
  line-height: 8px;
  overflow: hidden;
  white-space: nowrap;
}
.toggles {
  border-left: 1px solid #5c5c5c;
}
.right {
  margin-left: auto;
}
.model {
  width: 120px;
  padding-bottom: 6px;
  border-left: 1px solid #5c5c5c;
  line-height: 21px;
}
.spaced {
  margin: 0 4px 0 27px;
}

.taskbar {
  display: flex;
  height: 100px;
  background:
    radial-gradient(ellipse at 12% 30%, rgba(0, 0, 0, 0.35), transparent 12%),
    radial-gradient(ellipse at 48% 60%, rgba(58, 50, 30, 0.5), transparent 22%),
    radial-gradient(ellipse at 83% 40%, rgba(40, 38, 26, 0.6), transparent 10%),
    linear-gradient(90deg, #1c1b12, #16140c 20%, #231f14 35%, #1e1b11 60%, #141109 82%, #1a160c);
  color: #fff;
}
.taskbar button {
  display: flex;
  align-items: center;
  justify-content: center;
}
.sys {
  width: 120px;
}
.i40 {
  width: 40px;
  height: 40px;
}
.i48 {
  width: 48px;
  height: 38px;
}
.apps {
  display: flex;
  flex: 1;
  margin-left: 4px;
}
.task {
  position: relative;
  width: 124px;
}
.task svg {
  width: 56px;
  height: 56px;
  overflow: visible;
}
.task.running::after {
  content: "";
  position: absolute;
  right: 11px;
  bottom: 0;
  left: 12px;
  height: 5px;
  background: #76b9ed;
}
.task.active {
  background: linear-gradient(90deg, transparent 2px, #4d4a42 2px, #55514a 113px, #2f2d28 113px, #2f2d28 115px, #45423b 115px, #45423b 123px, transparent 123px);
}
.task.active::after {
  right: 1px;
  left: 2px;
}
.tray {
  display: flex;
}
.tray > button {
  width: 80px;
}
.tray svg {
  width: 40px;
  height: 40px;
}
.tray .chevron svg {
  width: 34px;
  height: 34px;
}
.tray > .keyboard {
  width: 100px;
}
.tray .keyboard svg {
  width: 70px;
  height: 40px;
}
.tray > .lang {
  width: 90px;
  margin-right: 8px;
}
.tray > .clock {
  flex-direction: column;
  width: 170px;
  line-height: 43px;
}
.tray > .desktop {
  width: 11px;
  margin-left: 8px;
  border-left: 2px solid #77736b;
}
</style>
